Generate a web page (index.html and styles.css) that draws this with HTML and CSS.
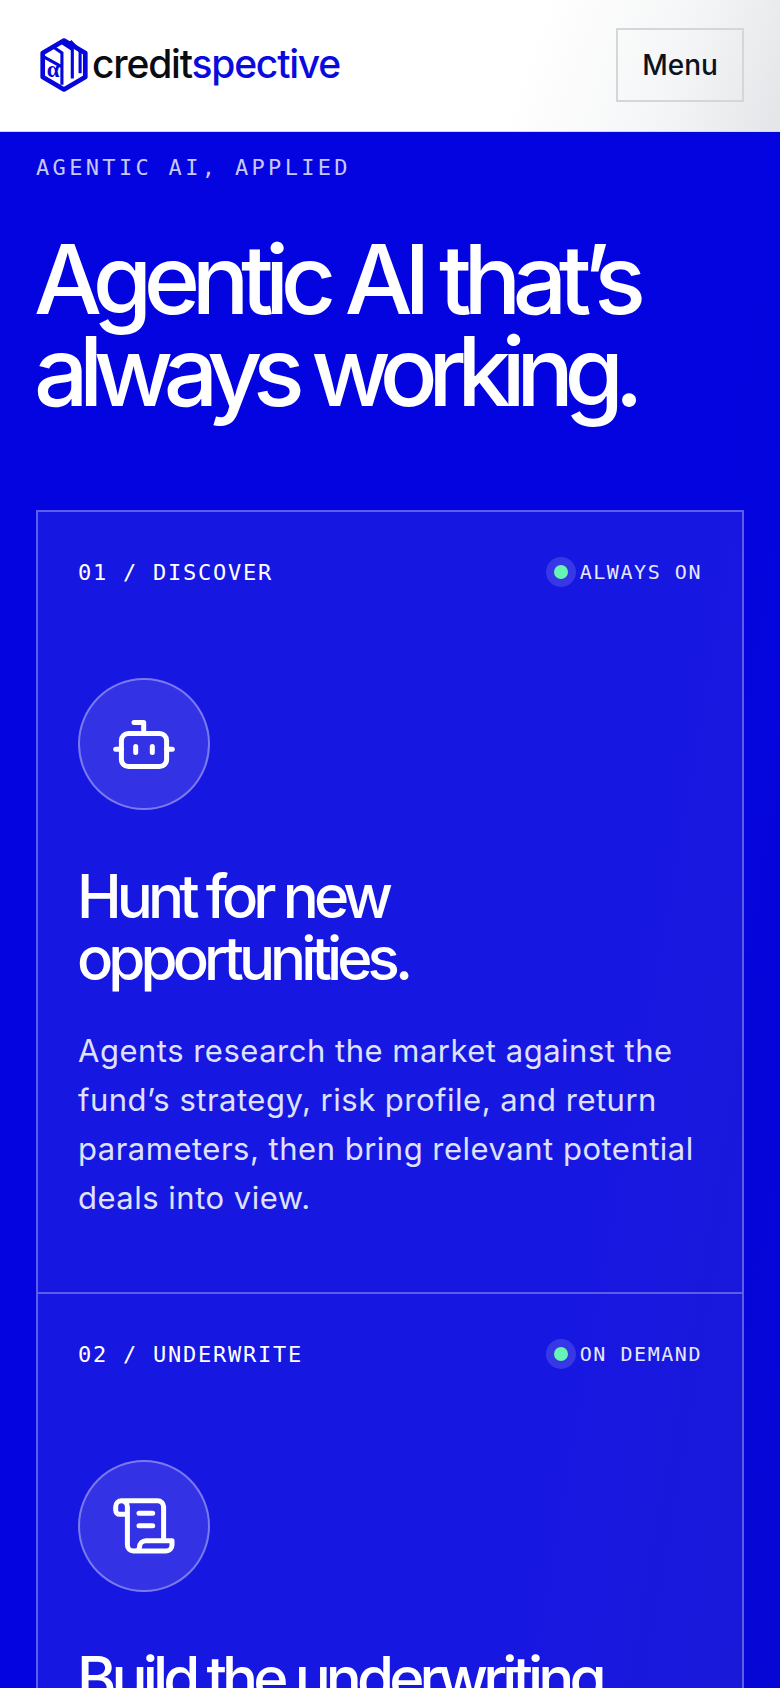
FILE: index.html
```html
<!DOCTYPE html>
<html lang="en">
<head>
<meta charset="utf-8">
<title>Creditspective</title>
<link rel="stylesheet" href="styles.css">
</head>
<body>
<div class="page">
  <header class="site-header">
    <a class="logo" href="#">
      <svg class="logo-mark" viewBox="0 0 46 52" aria-hidden="true">
        <path class="lm-hex" d="M23 2.500 43.500 14.500V37.500L23 49.500 2.500 37.500V14.500Z"/>
        <path class="lm-line" d="M12.300 8.500 21 14.300V45M20.700 4.300 31 11V39M29 3 38.500 12.700V34M4 18.500 21 27.700"/>
        <text class="lm-alpha" x="6.500" y="38">α</text>
      </svg>
      <span class="logo-text"><span class="logo-dark">credit</span><span class="logo-blue">spective</span></span>
    </a>
    <button class="menu-btn">Menu</button>
  </header>
  <main class="hero">
    <p class="eyebrow">AGENTIC AI, APPLIED</p>
    <h1 class="headline"><span class="line-one">Agentic AI that’s</span><span class="line-two">always working.</span></h1>
    <section class="cards">
      <article class="card">
        <div class="card-top">
          <span class="card-label">01 / DISCOVER</span>
          <span class="status"><i class="dot"></i>ALWAYS ON</span>
        </div>
        <div class="icon-circle">
          <svg class="icon" viewBox="0 0 64 64" aria-hidden="true">
            <path d="M22 10.400H31.700V21.400"/>
            <rect x="9.400" y="21.400" width="45.200" height="33.200" rx="7"/>
            <path d="M3.700 37.300H9.400M54.600 37.300H60.300M23.700 34.400V40.600M40.300 34.400V40.600"/>
          </svg>
        </div>
        <h2 class="card-title">Hunt for new<br>opportunities.</h2>
        <p class="card-text">Agents research the market against the fund’s strategy, risk profile, and return parameters, then bring relevant potential deals into view.</p>
      </article>
      <article class="card">
        <div class="card-top">
          <span class="card-label">02 / UNDERWRITE</span>
          <span class="status"><i class="dot"></i>ON DEMAND</span>
        </div>
        <div class="icon-circle">
          <svg class="icon" viewBox="0 0 64 64" aria-hidden="true">
            <path d="M9 6.700H45.600A6 6 0 0 1 51.600 12.700V46.700M34 46.700H60V51A6 6 0 0 1 54 57H21.400A6 6 0 0 1 15.400 51V12.700A5.850 5.850 0 0 0 3.700 12.700V16.300A4 4 0 0 0 7.700 20.300H15.400M34 46.700A6.500 6.500 0 0 0 27.500 53.200C27.500 55.500 25 57 21.400 57M27 19.300H40.700M27 31.700H40.700"/>
          </svg>
        </div>
        <h2 class="card-title">Build the underwriting</h2>
      </article>
    </section>
  </main>
</div>
</body>
</html>
```
FILE: styles.css
```css
* { box-sizing: border-box; }
html, body { margin: 0; height: 1688px; overflow: hidden; }
body { font-family: Inter, "Liberation Sans", sans-serif; background: #0404e0; }
.page { height: 1688px; overflow: hidden; display: flex; flex-direction: column; }

.site-header {
  height: 132px;
  flex: none;
  display: flex;
  align-items: center;
  justify-content: space-between;
  padding: 0 36px 1px 40px;
  background: linear-gradient(110deg, #fff 66%, #f5f6f7 84%, #e4e5e8 100%);
  border-bottom: 1px solid #d6d7da;
}
.logo { display: flex; align-items: center; text-decoration: none; }
.logo-mark { width: 48px; height: 54px; margin-right: 4px; }
.lm-hex { fill: #fff; stroke: #0505dc; stroke-width: 4.500; stroke-linejoin: round; }
.lm-line { fill: none; stroke: #0505dc; stroke-width: 3; }
.lm-alpha { font-family: "Liberation Serif", serif; font-size: 22px; fill: #0505dc; font-weight: 700; }
.logo-text { font-size: 39px; font-weight: 500; letter-spacing: -1.2px; line-height: 1; margin-top: -4px; }
.logo-dark { color: #0b0b12; }
.logo-blue { color: #0a0adf; }
.menu-btn {
  width: 128px;
  height: 74px;
  font-family: Inter, sans-serif;
  font-size: 28px;
  font-weight: 500;
  color: #0b1220;
  background: transparent;
  border: 2px solid #d5d6da;
  padding: 0;
}

.hero {
  flex: 1;
  padding: 0 36px;
  background: linear-gradient(100deg, #0404e0 70%, #0707d2 100%);
}
.eyebrow {
  margin: 22px 0 0;
  font-family: "DejaVu Sans Mono", monospace;
  font-size: 22px;
  line-height: 28px;
  letter-spacing: 3.330px;
  color: #c6c8f8;
}
.headline {
  margin: 51px 0 0 -2px;
  font-size: 96px;
  line-height: 92px;
  font-weight: 500;
  color: #fff;
}
.line-one { display: block; letter-spacing: -8.500px; }
.line-two { display: block; letter-spacing: -9.500px; }
.cards { margin-top: 93px; border: 2px solid rgba(255,255,255,.3); background: rgba(255,255,255,.08); }
.card { padding: 46px 40px 0; height: 780px; }
.card + .card { border-top: 2px solid rgba(255,255,255,.3); }
.card-top { display: flex; justify-content: space-between; align-items: center; height: 28px; }
.card-label {
  font-family: "DejaVu Sans Mono", monospace;
  font-size: 22px;
  letter-spacing: 1.750px;
  color: #fff;
}
.status {
  display: flex;
  align-items: center;
  gap: 5px;
  font-family: "DejaVu Sans Mono", monospace;
  font-size: 20px;
  letter-spacing: 1.550px;
  color: #e6e8ff;
}
.dot {
  width: 14px;
  height: 14px;
  margin: 0 7px;
  border-radius: 50%;
  background: #66f5b4;
  box-shadow: 0 0 0 8px rgba(255,255,255,.14);
}
.icon-circle {
  width: 132px;
  height: 132px;
  margin-top: 92px;
  border-radius: 50%;
  border: 2px solid rgba(255,255,255,.35);
  background: rgba(255,255,255,.12);
  display: flex;
  align-items: center;
  justify-content: center;
}
.icon { width: 64px; height: 64px; fill: none; stroke: #fff; stroke-width: 5; stroke-linecap: round; stroke-linejoin: round; }
.card-title {
  margin: 55px 0 0 -1px;
  font-size: 60px;
  line-height: 62px;
  font-weight: 500;
  letter-spacing: -4.900px;
  color: #fff;
}
.card-text {
  margin: 37px 0 0;
  font-size: 31px;
  line-height: 49px;
  letter-spacing: .5px;
  color: #dfe1fd;
}
```
